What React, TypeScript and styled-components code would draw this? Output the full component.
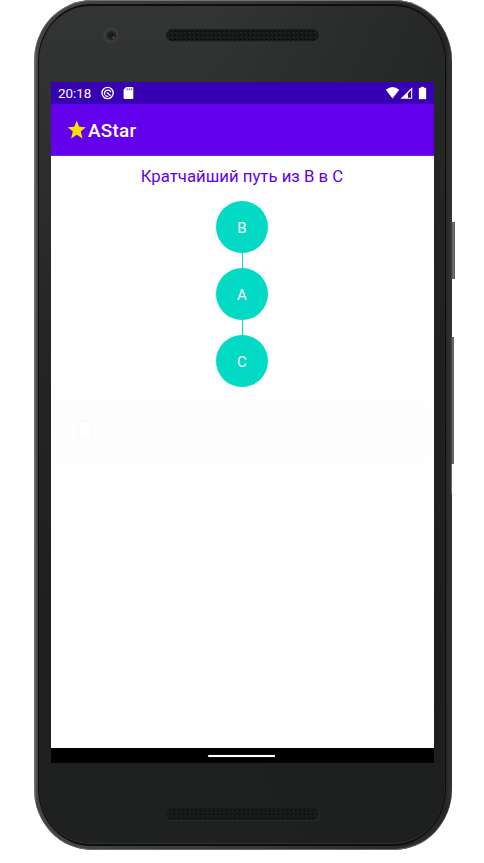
import React from 'react';
import styled, { createGlobalStyle } from 'styled-components';

const GlobalStyle = createGlobalStyle`
  * { box-sizing: border-box; }
  body { margin: 0; background: #fff; font-family: Roboto, "Noto Sans", sans-serif; }
`;

const Stage = styled.main`
  width: 484px;
  height: 863px;
  padding-left: 34px;
  overflow: hidden;
`;

const Device = styled.div`
  position: relative;
  width: 418px;
  height: 850px;
  padding: 4px 6px 4px 4px;
  border-radius: 58px / 61px;
  background: linear-gradient(90deg, #777 0, #454545 3px, #3a3838 50%, #272525 412px, #353232 417px);
  box-shadow: inset 0 1px 0 #707372, inset 0 -1px 0 #666;
`;

const Rim = styled.div`
  height: 100%;
  padding: 2px 1px;
  border-radius: 53px / 57px;
  background: #0d0e0e;
`;

const Face = styled.div`
  display: flex;
  flex-direction: column;
  height: 100%;
  padding: 0 10px 0 12px;
  border-radius: 51px / 55px;
  background: linear-gradient(90deg, transparent 40%, rgba(28, 30, 31, 0.55)),
    linear-gradient(180deg, #333534 0, #303231 90px, #242625 330px, #1e201f 600px, #1f2120 100%);
  box-shadow: inset 0 -1px 1px #313433;
`;

const SideKey = styled.span<{ $top: number; $height: number; $width: number }>`
  position: absolute;
  left: 417px;
  top: ${(p) => p.$top}px;
  width: ${(p) => p.$width}px;
  height: ${(p) => p.$height}px;
  background: linear-gradient(90deg, #383536, #767474 65%, #545252);
`;

const TopBezel = styled.div`
  display: flex;
  height: 76px;
  padding: 21px 0 0 51px;
`;

const BottomBezel = styled.div`
  display: flex;
  padding: 45px 0 0 115px;
`;

const SpeakerArt = styled.svg<{ $offset?: number }>`
  display: block;
  margin: ${(p) => (p.$offset ? `2px 0 0 ${p.$offset}px` : '0')};
`;

const Screen = styled.div`
  display: flex;
  flex-direction: column;
  width: 383px;
  height: 681px;
  background: #fefefe;
`;

const StatusBar = styled.header`
  display: flex;
  align-items: center;
  height: 22px;
  padding: 0 7px;
  background: #3700b3;
  color: #fff;
`;

const Clock = styled.time`
  width: 43px;
  padding-top: 1px;
  font-size: 13.4px;
  line-height: 21px;
`;

const StatusIcons = styled.svg<{ $end?: boolean }>`
  display: block;
  margin-left: ${(p) => (p.$end ? 'auto' : '0')};
`;

const AppBar = styled.div`
  display: flex;
  align-items: center;
  height: 52px;
  padding-left: 16px;
  background: #6200ee;
  color: #fff;
  border-bottom: 1px solid #7120ed;
`;

const AppTitle = styled.h1`
  margin: 3px 0 0 1px;
  font-size: 18.9px;
  line-height: 24px;
  font-weight: 500;
  letter-spacing: 0.25px;
`;

const Content = styled.section`
  display: flex;
  flex: 1;
  flex-direction: column;
  align-items: center;
`;

const Heading = styled.h2`
  height: 45px;
  margin: 0;
  padding: 9px 1px 0 0;
  color: #6200ee;
  font-size: 16.75px;
  line-height: 22px;
  font-weight: 400;
  white-space: nowrap;
`;

const Path = styled.div`
  display: flex;
  flex-direction: column;
  align-items: center;
  width: 53px;
  padding-right: 1px;
`;

const Node = styled.div`
  display: flex;
  align-items: center;
  justify-content: center;
  width: 52px;
  height: 52px;
  padding-top: 1px;
  border-radius: 50%;
  background: #03dac5;
  color: #fff;
  font-size: 15px;
`;

const Edge = styled.div`
  width: 1px;
  height: 15px;
  background: #03dac5;
`;

const FadingNotice = styled.div`
  display: flex;
  align-items: center;
  align-self: stretch;
  height: 57px;
  margin: 15px 9px 0;
  padding-left: 18px;
  border-radius: 5px;
  background: #fdfdfe;
`;

const NavBar = styled.footer`
  display: flex;
  align-items: center;
  justify-content: center;
  height: 15px;
  padding-right: 2px;
  background: #000;
`;

const HomeHandle = styled.span`
  width: 67px;
  height: 2px;
  margin-top: 1px;
  border-radius: 1px;
  background: #fff;
  box-shadow: 0 0 1px #bbb;
`;

function Speaker({ id, offset, light }: { id: string; offset?: number; light?: boolean }) {
  return (
    <SpeakerArt $offset={offset} width="154" height="14" viewBox="0 0 154 14">
      <defs>
        <pattern id={id} width="4.33" height="4" patternUnits="userSpaceOnUse" x="3" y="1">
          <rect x="1" y="1" width="1.7" height="1.7" fill={light ? '#080a0a' : '#050607'} />
          <rect x="2" y="2" width="1" height="1" fill="#303332" />
        </pattern>
      </defs>
      <rect x="0.5" y="0.5" width="153" height="12.6" rx="6.3" fill="#414544" opacity="0.55" />
      <rect width="153" height="12.5" rx="6.2" fill="#181a1a" />
      <rect x="3" y="1" width="147" height="11" rx="5" fill={`url(#${id})`} />
    </SpeakerArt>
  );
}

const route = ['B', 'A', 'C'];

export default function App() {
  return (
    <>
      <GlobalStyle />
      <Stage>
        <Device>
          <SideKey $top={222} $height={57} $width={4} />
          <SideKey $top={337} $height={127} $width={3} />
          <SideKey $top={464} $height={30} $width={1} />
          <Rim>
            <Face>
              <TopBezel>
                <svg width="17" height="17" viewBox="0 0 17 17">
                  <circle cx="9" cy="8.5" r="8" fill="#3a3c3c" />
                  <circle cx="9.2" cy="8.5" r="5" fill="#26282a" />
                  <circle cx="9.5" cy="8.5" r="3" fill="#1b1a22" />
                  <circle cx="11.5" cy="10.5" r="0.9" fill="#79545f" />
                </svg>
                <Speaker id="earpiece" offset={47} />
              </TopBezel>
              <Screen>
                <StatusBar>
                  <Clock>20:18</Clock>
                  <StatusIcons width="34" height="14" viewBox="0 0 34 14">
                    <circle cx="6.6" cy="7" r="5.6" fill="none" stroke="#fff" strokeWidth="1.4" />
                    <path d="M3.7 8.7A3.3 3.3 0 0 1 9.9 6.2M4.1 9.4A3.3 3.3 0 0 0 7.3 10.2M5.8 6.4l4 3.3" fill="none" stroke="#fff" strokeWidth="1.3" />
                    <path d="M25.1 1h6.2q1 0 1 1v10q0 1-1 1h-7.7q-1 0-1-1V3.8Z" fill="#fff" />
                    <path d="M26.2 2.3v2M28.3 2.3v2M30.4 2.3v2" stroke="#5730bc" strokeWidth="0.9" />
                  </StatusIcons>
                  <StatusIcons $end width="42" height="14" viewBox="0 0 42 14">
                    <path d="M.8 3.8Q7.5-1.6 14.3 3.8L7.5 12.5Z" fill="#fff" />
                    <path d="M15.5 12.8 27.2 1.2v11.6Z" fill="#fff" />
                    <path d="M23 7.2 26.1 4.1v7.6H23Z" fill="#3700b3" />
                    <path d="M36 1h3v1h2v11h-7V2h2Z" fill="#fff" stroke="#fff" strokeWidth="0.3" strokeLinejoin="round" />
                  </StatusIcons>
                </StatusBar>
                <AppBar>
                  <svg width="20" height="20" viewBox="0 0 20 20">
                    <path d="m9.8.8 2.5 6 6.4.5-4.9 4.2 1.7 7-5.7-3.7-5.7 3.7 1.7-7L.8 7.3l6.4-.5Z" fill="#ffde03" />
                  </svg>
                  <AppTitle>AStar</AppTitle>
                </AppBar>
                <Content>
                  <Heading>Кратчайший путь из B в C</Heading>
                  <Path>
                    {route.map((name, index) => (
                      <React.Fragment key={name}>
                        {index > 0 && <Edge />}
                        <Node>{name}</Node>
                      </React.Fragment>
                    ))}
                  </Path>
                  <FadingNotice>
                    <svg width="14" height="21" viewBox="0 0 14 21">
                      <rect x="1" y="1" width="12" height="19" rx="1" fill="#fff" stroke="#fafcfa" strokeWidth="2" />
                    </svg>
                  </FadingNotice>
                </Content>
                <NavBar>
                  <HomeHandle />
                </NavBar>
              </Screen>
              <BottomBezel>
                <Speaker id="loudspeaker" light />
              </BottomBezel>
            </Face>
          </Rim>
        </Device>
      </Stage>
    </>
  );
}
